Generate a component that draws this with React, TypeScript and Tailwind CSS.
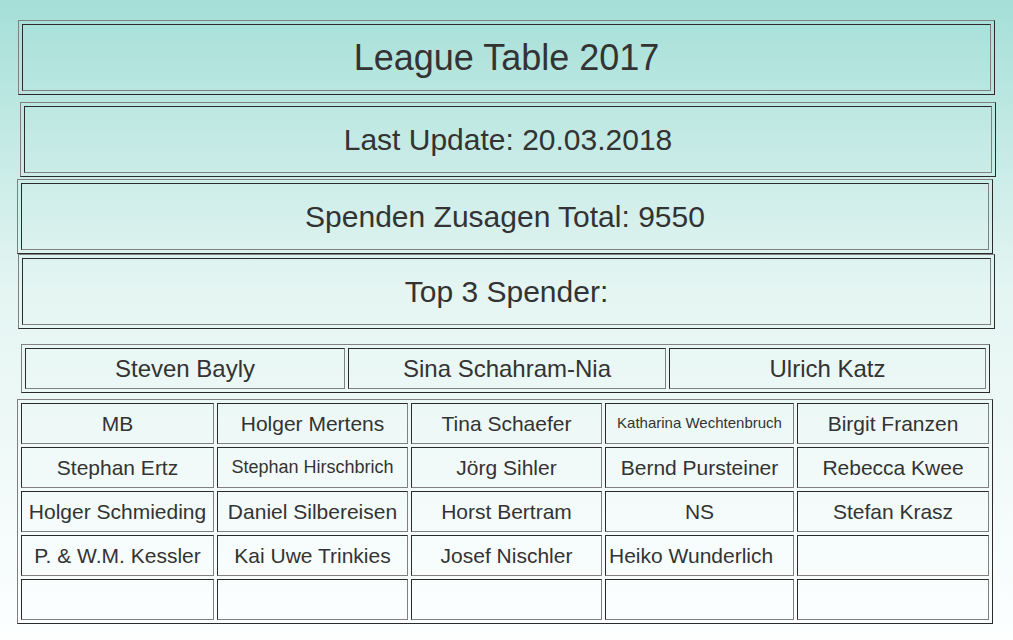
const outer =
  'border border-t-[#808080] border-l-[#808080] border-r-[#2b2b2b] border-b-[#2b2b2b] p-[3px]';
const cell =
  'border border-t-[#2b2b2b] border-l-[#2b2b2b] border-r-[#808080] border-b-[#808080] flex items-center';

function Banner({ text, className }: { text: string; className: string }) {
  return (
    <div className={`${outer} h-[75px] ${className}`}>
      <div className={`${cell} h-full justify-center text-[30px]`}>{text}</div>
    </div>
  );
}

const top3 = ['Steven Bayly', 'Sina Schahram-Nia', 'Ulrich Katz'];

type Donor = { name: string; size?: string; left?: boolean };

const donors: Donor[] = [
  { name: 'MB' },
  { name: 'Holger Mertens' },
  { name: 'Tina Schaefer' },
  { name: 'Katharina Wechtenbruch', size: 'text-[15px]' },
  { name: 'Birgit Franzen' },
  { name: 'Stephan Ertz' },
  { name: 'Stephan Hirschbrich', size: 'text-[18px]' },
  { name: 'Jörg Sihler' },
  { name: 'Bernd Pursteiner' },
  { name: 'Rebecca Kwee' },
  { name: 'Holger Schmieding' },
  { name: 'Daniel Silbereisen' },
  { name: 'Horst Bertram' },
  { name: 'NS' },
  { name: 'Stefan Krasz' },
  { name: 'P. & W.M. Kessler' },
  { name: 'Kai Uwe Trinkies' },
  { name: 'Josef Nischler' },
  { name: 'Heiko Wunderlich', left: true },
  { name: '' },
  { name: '' },
  { name: '' },
  { name: '' },
  { name: '' },
  { name: '' },
];

export default function App() {
  return (
    <div className="min-h-[640px] bg-gradient-to-b from-[#a4dfd8] via-[#e4f5f2] via-45% to-[#fdffff] pt-[20px] font-['Liberation_Sans',Arial,sans-serif] text-[#333] overflow-hidden">
      <div className={`${outer} h-[75px] ml-[18px] w-[977px]`}>
        <div className={`${cell} h-full justify-center text-[36px]`}>League Table 2017</div>
      </div>
      <Banner text="Last Update: 20.03.2018" className="ml-[20px] w-[976px] mt-[7px]" />
      <Banner text="Spenden Zusagen Total: 9550" className="ml-[17px] w-[976px] mt-[2px]" />
      <Banner text="Top 3 Spender:" className="ml-[18px] w-[977px]" />

      <div className={`${outer} ml-[21px] w-[969px] mt-[15px] grid grid-cols-[320px_318px_317px] gap-[3px]`}>
        {top3.map((n) => (
          <div key={n} className={`${cell} h-[41px] justify-center text-[24px]`}>
            {n}
          </div>
        ))}
      </div>

      <div
        className={`${outer} ml-[17px] w-[976px] mt-[6px] grid grid-cols-[193px_191px_191px_189px_192px] gap-[3px]`}
      >
        {donors.map((d, i) => (
          <div
            key={i}
            className={`${cell} h-[41px] whitespace-nowrap ${d.left ? 'justify-start pl-[3px]' : 'justify-center'} ${d.size ?? 'text-[21px]'}`}
          >
            {d.name}
          </div>
        ))}
      </div>
    </div>
  );
}
